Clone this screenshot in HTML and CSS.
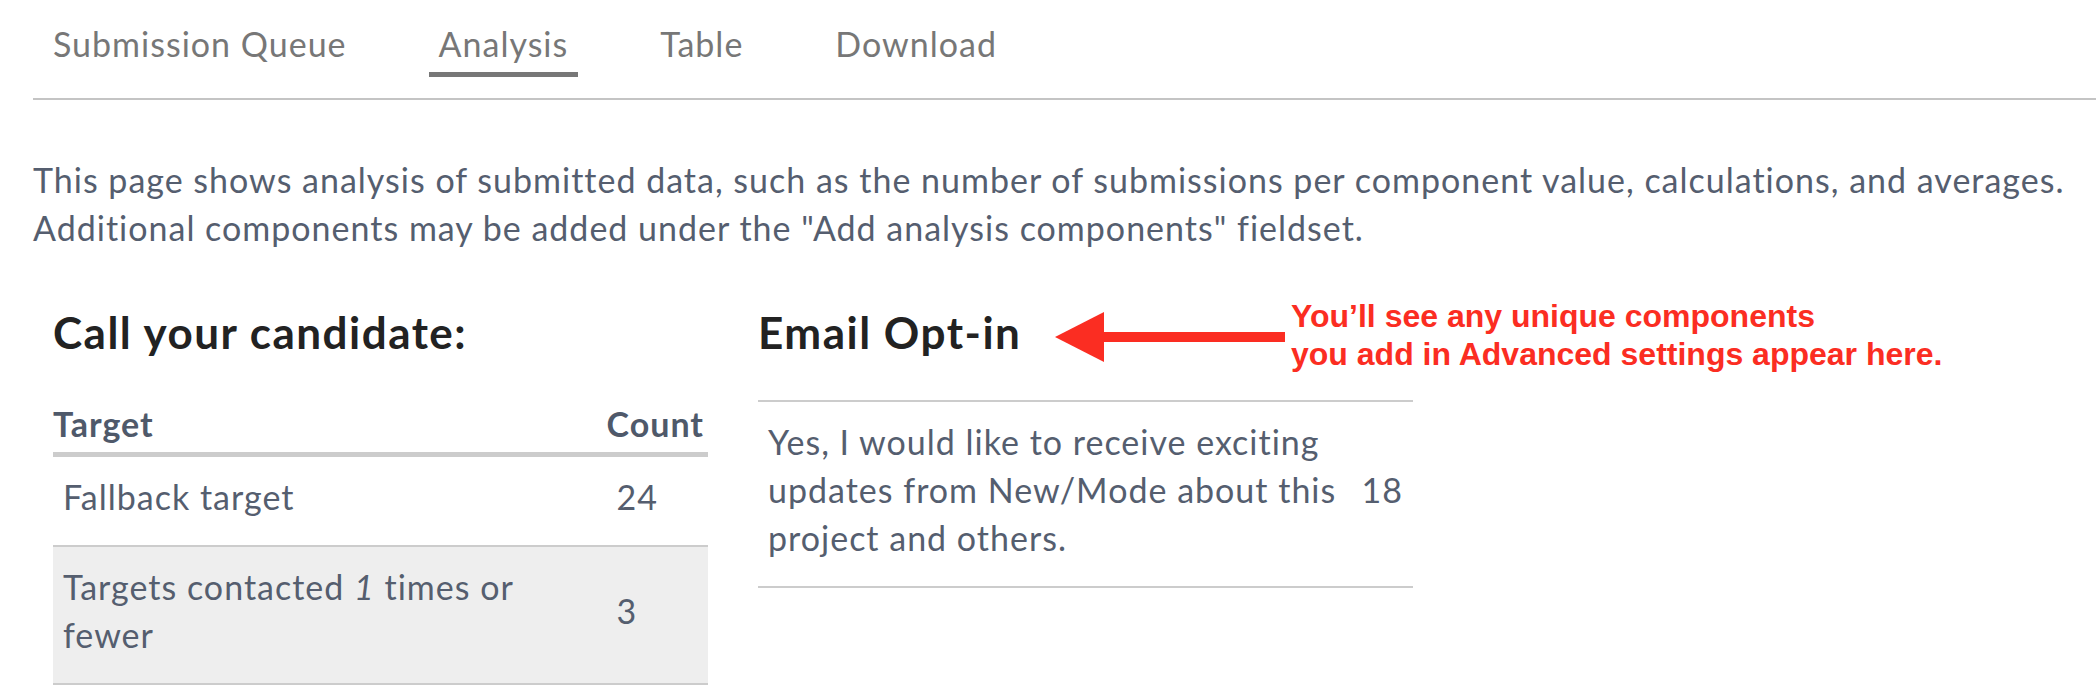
FILE: index.html
```html
<html>
    <head>
        <link rel="stylesheet" href="styles.css">
    </head>
<body>
    <nav class="tabs">
        <a class="tab">Submission Queue</a>
        <a class="tab active">Analysis</a>
        <a class="tab">Table</a>
        <a class="tab">Download</a>
    </nav>

    <main class="page">
        <p class="intro">This page shows analysis of submitted data, such as the number of submissions per component value, calculations, and averages. Additional components may be added under the "Add analysis components" fieldset.</p>

        <div class="results">
            <section class="result">
                <h2>Call your candidate:</h2>
                <table class="resultTable">
                    <thead>
                        <tr><th>Target</th><th>Count</th></tr>
                    </thead>
                    <tbody>
                        <tr><td>Fallback target</td><td class="count">24</td></tr>
                        <tr><td>Targets contacted <em>1</em> times or fewer</td><td class="count">3</td></tr>
                    </tbody>
                </table>
            </section>

            <section class="result">
                <h2>Email Opt-in</h2>
                <table class="resultTable noHead">
                    <tbody>
                        <tr><td>Yes, I would like to receive exciting updates from New/Mode about this project and others.</td><td class="count">18</td></tr>
                    </tbody>
                </table>
            </section>
        </div>

        <!-- screenshot annotation -->
        <div class="note">
            <svg class="noteArrow" width="230" height="50" viewBox="0 0 230 50">
                <polygon points="0,25 49,0 49,50" fill="#fb2d22"/>
                <rect x="48" y="20" width="182" height="10" fill="#fb2d22"/>
            </svg>
            <span class="noteText">You’ll see any unique components<br>you add in Advanced settings appear here.</span>
        </div>
    </main>
</body>

</html>
```

FILE: styles.css
```css
* {
    font-family: "Lato", sans-serif;
}
body {
    margin: 0;
}

/* tabs across the top */
.tabs {
    display: flex;
    gap: 72px;
    margin-left: 33px;
    padding: 24px 0 21px 10px;
    border-bottom: 2px solid #c4c4c4;
}
.tab {
    padding: 0 10px 8px;
    font-size: 34px;
    line-height: 40px;
    letter-spacing: 1px;
    color: #777;
    border-bottom: 5px solid transparent;
}
.tab.active {
    border-bottom-color: #777;
}

.page {
    position: relative;
    padding-left: 33px;
}
.intro {
    margin: 56px 0 0;
    font-size: 34px;
    line-height: 48px;
    letter-spacing: 1px;
    color: #555e6f;
}

.results {
    display: flex;
    gap: 50px;
    margin-top: 54px;
    padding-left: 20px;
}
.result {
    flex: 0 0 655px;
}
.result h2 {
    margin: 0 0 42px;
    font-size: 44px;
    line-height: 52px;
    font-weight: 700;
    letter-spacing: 1.5px;
    color: #222;
}

.resultTable {
    width: 100%;
    border-collapse: collapse;
    font-size: 34px;
    line-height: 48px;
    letter-spacing: 1px;
    color: #555e6f;
}
.resultTable th {
    padding: 0 4px 4px 0;
    text-align: left;
    font-weight: 700;
    color: #4f596a;
    border-bottom: 5px solid #ccc;
}
.resultTable td {
    padding: 16px 10px 24px;
    border-bottom: 2px solid #ccc;
}
.resultTable td.count {
    vertical-align: middle;
}
.resultTable tbody tr:nth-child(even) {
    background: #eee;
}
.resultTable.noHead {
    margin-top: 4px;
    border-top: 2px solid #ccc;
}

/* red callout drawn over the page */
.note {
    position: absolute;
    left: 1055px;
    top: 156px;
    display: flex;
    align-items: flex-start;
}
.noteText {
    margin-left: 6px;
    margin-top: -15px;
    font-family: "Liberation Sans", Arial, sans-serif;
    font-weight: 700;
    font-size: 32px;
    line-height: 38px;
    color: #fb2d22;
}
```
